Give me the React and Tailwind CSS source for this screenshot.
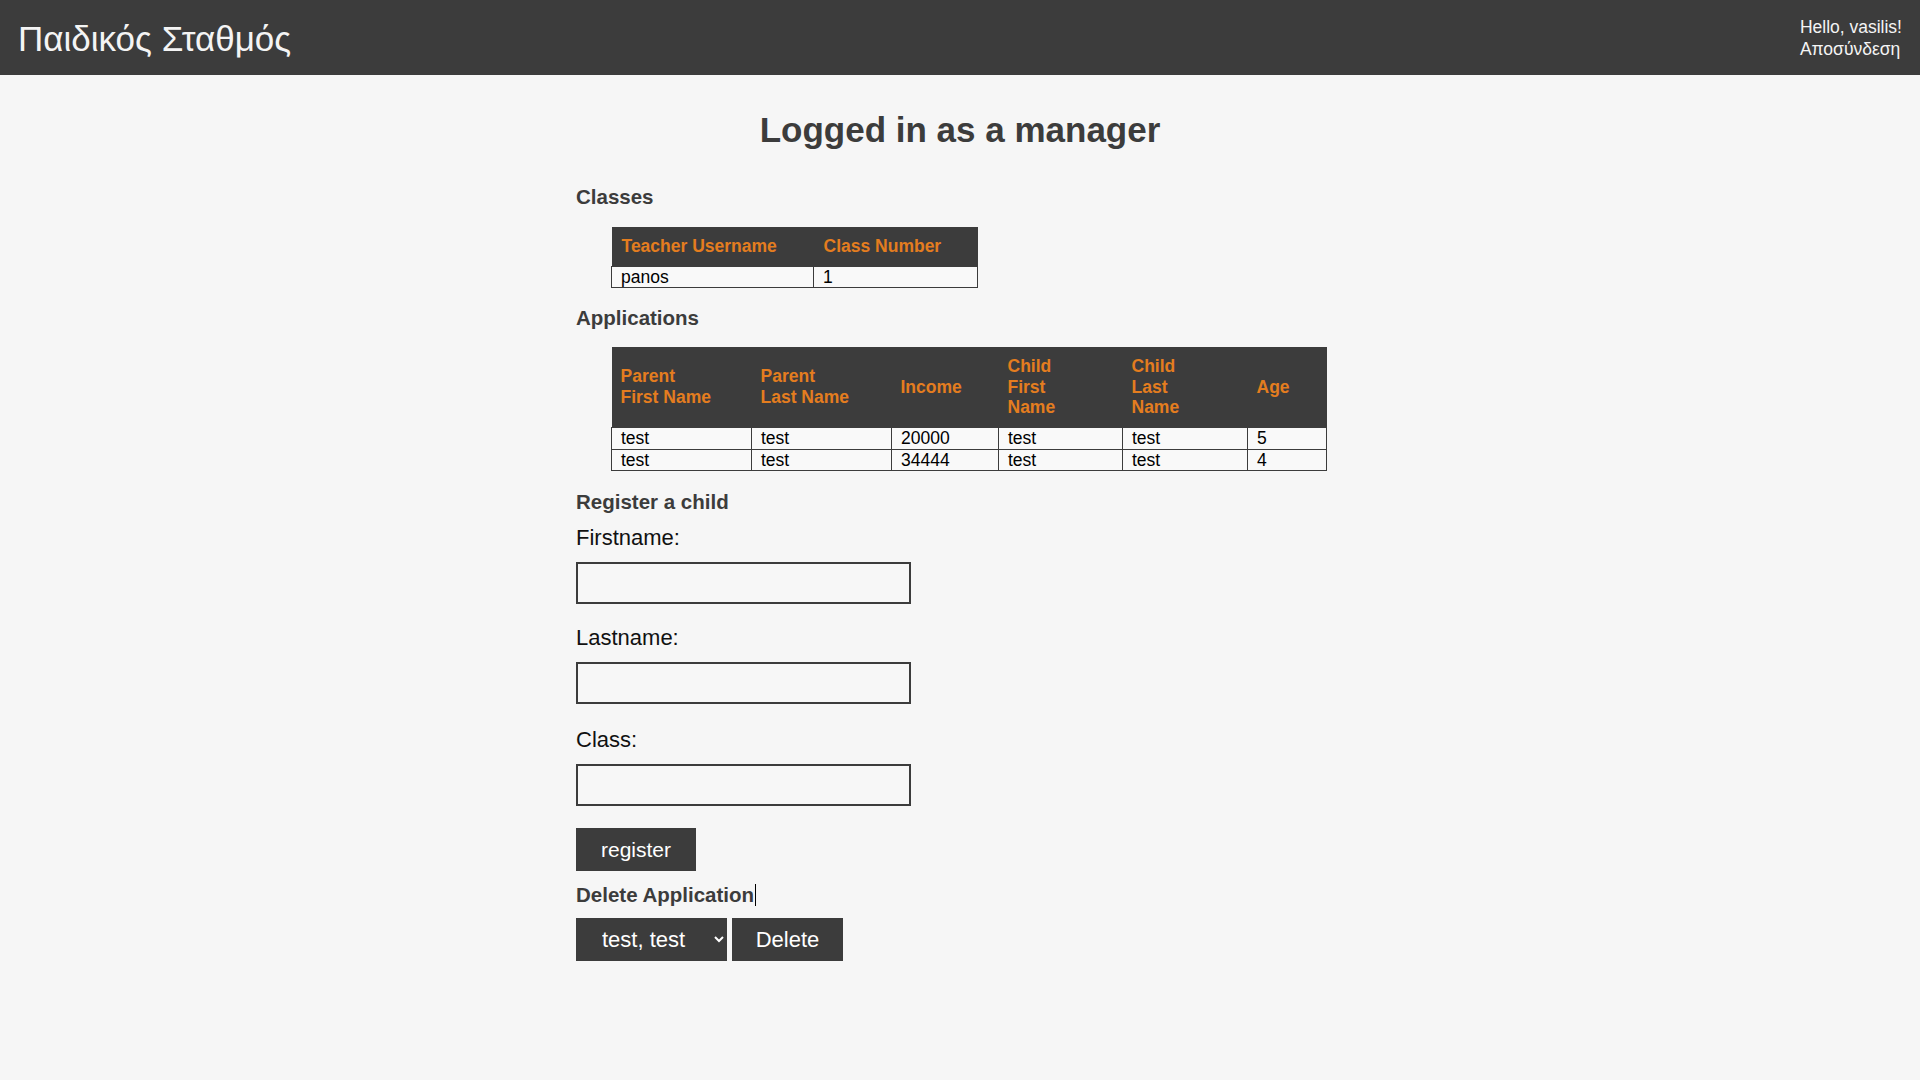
import React from "react";

const APPLICATIONS = [
  { pf: "test", pl: "test", income: "20000", cf: "test", cl: "test", age: "5" },
  { pf: "test", pl: "test", income: "34444", cf: "test", cl: "test", age: "4" },
];

function Header() {
  return (
    <header className="h-[75px] bg-[#3c3c3c] flex items-center justify-between pl-[18px] pr-[18px]">
      <h1 className="text-[35px] leading-none text-[#f4f4f4] pt-[2px]">Παιδικός Σταθμός</h1>
      <div className="text-[17.5px] leading-[22px] text-[#f4f4f4] text-left">
        <div>Hello, vasilis!</div>
        <a href="#" className="block">Αποσύνδεση</a>
      </div>
    </header>
  );
}

function Field({ label, top }) {
  return (
    <div className={top}>
      <label className="block text-[22px] leading-[24px] text-[#111]">{label}</label>
      <input
        type="text"
        className="block mt-[12px] w-[335px] h-[42px] border-2 border-[#3c3c3c] bg-[#f7f7f7] px-2 outline-none"
      />
    </div>
  );
}

export default function App() {
  return (
    <div className="min-h-[1080px] bg-[#f6f6f6] font-['Liberation_Sans',Arial,sans-serif]">
      <Header />

      <main className="w-[768px] mx-auto">
        <h2 className="mt-[35px] text-center text-[35px] leading-[40px] font-bold text-[#3c3c3c]">
          Logged in as a manager
        </h2>

        {/* Classes */}
        <h3 className="mt-[35px] text-[20.5px] leading-[23px] font-bold text-[#3c3c3c]">Classes</h3>
        <table className="mt-[19px] ml-[35px] border-collapse text-[17.5px] leading-[20px]">
          <thead>
            <tr className="bg-[#3c3c3c] text-[#e47d1f] font-bold text-left">
              <th className="w-[202px] h-[39px] px-[10px] text-left">Teacher Username</th>
              <th className="w-[164px] h-[39px] px-[10px] text-left">Class Number</th>
            </tr>
          </thead>
          <tbody className="bg-[#f9f9f9] text-black">
            <tr>
              <td className="border border-[#3c3c3c] px-[9px]">panos</td>
              <td className="border border-[#3c3c3c] px-[9px]">1</td>
            </tr>
          </tbody>
        </table>

        {/* Applications */}
        <h3 className="mt-[18px] text-[20.5px] leading-[23px] font-bold text-[#3c3c3c]">Applications</h3>
        <table className="mt-[18px] ml-[35px] border-collapse text-[17.5px] leading-[20.5px]">
          <thead>
            <tr className="bg-[#3c3c3c] text-[#e47d1f] font-bold">
              <th className="w-[140px] h-[81px] px-[9px] text-left">Parent<br />First Name</th>
              <th className="w-[140px] h-[81px] px-[9px] text-left">Parent<br />Last Name</th>
              <th className="w-[107px] h-[81px] px-[9px] text-left">Income</th>
              <th className="w-[124px] h-[81px] px-[9px] text-left">Child<br />First<br />Name</th>
              <th className="w-[125px] h-[81px] px-[9px] text-left">Child<br />Last<br />Name</th>
              <th className="w-[79px] h-[81px] px-[9px] text-left">Age</th>
            </tr>
          </thead>
          <tbody className="bg-[#f9f9f9] text-black">
            {APPLICATIONS.map((a, i) => (
              <tr key={i}>
                <td className="border border-[#3c3c3c] px-[9px]">{a.pf}</td>
                <td className="border border-[#3c3c3c] px-[9px]">{a.pl}</td>
                <td className="border border-[#3c3c3c] px-[9px]">{a.income}</td>
                <td className="border border-[#3c3c3c] px-[9px]">{a.cf}</td>
                <td className="border border-[#3c3c3c] px-[9px]">{a.cl}</td>
                <td className="border border-[#3c3c3c] px-[9px]">{a.age}</td>
              </tr>
            ))}
          </tbody>
        </table>

        {/* Register a child */}
        <h3 className="mt-[19px] text-[20.5px] leading-[23px] font-bold text-[#3c3c3c]">Register a child</h3>
        <form onSubmit={(e) => e.preventDefault()}>
          <Field label="Firstname:" top="mt-[13px]" />
          <Field label="Lastname:" top="mt-[22px]" />
          <Field label="Class:" top="mt-[24px]" />
          <button
            type="submit"
            className="mt-[22px] w-[120px] h-[43px] bg-[#3c3c3c] text-white text-[21px]"
          >
            register
          </button>
        </form>

        {/* Delete Application */}
        <h3 className="mt-[12px] text-[20.5px] leading-[23px] font-bold text-[#3c3c3c] flex items-center">
          Delete Application
          <span className="inline-block w-px h-[22px] bg-black ml-px" />
        </h3>
        <div className="mt-[12px] flex items-start gap-[5px]">
          <select className="w-[151px] h-[43px] bg-[#3c3c3c] text-white text-[22px] pl-[22px] pr-[6px]">
            <option>test, test</option>
            <option>test, test</option>
          </select>
          <button className="w-[111px] h-[43px] bg-[#3c3c3c] text-white text-[22px]">Delete</button>
        </div>
      </main>
    </div>
  );
}
